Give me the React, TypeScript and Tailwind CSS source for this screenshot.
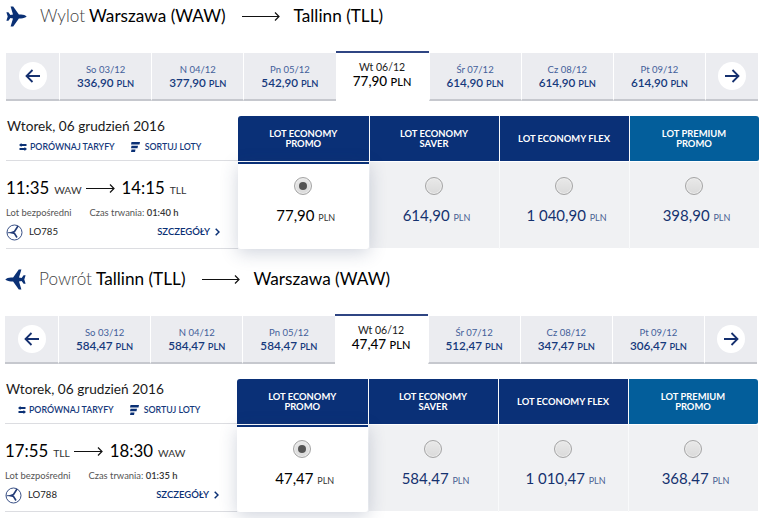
import React from "react";

type Day = { label: string; price: string };
type Fare = { name: string; price: string; premium?: boolean };
type Leg = {
  kind: string;
  from: string;
  to: string;
  back?: boolean;
  days: Day[];
  fares: Fare[];
  dep: string;
  depCode: string;
  arr: string;
  arrCode: string;
  duration: string;
  flight: string;
};

const legs: Leg[] = [
  {
    kind: "Wylot",
    from: "Warszawa (WAW)",
    to: "Tallinn (TLL)",
    days: [
      { label: "So 03/12", price: "336,90" },
      { label: "N 04/12", price: "377,90" },
      { label: "Pn 05/12", price: "542,90" },
      { label: "Wt 06/12", price: "77,90" },
      { label: "Śr 07/12", price: "614,90" },
      { label: "Cz 08/12", price: "614,90" },
      { label: "Pt 09/12", price: "614,90" },
    ],
    fares: [
      { name: "LOT ECONOMY PROMO", price: "77,90" },
      { name: "LOT ECONOMY SAVER", price: "614,90" },
      { name: "LOT ECONOMY FLEX", price: "1 040,90" },
      { name: "LOT PREMIUM PROMO", price: "398,90", premium: true },
    ],
    dep: "11:35",
    depCode: "WAW",
    arr: "14:15",
    arrCode: "TLL",
    duration: "01:40 h",
    flight: "LO785",
  },
  {
    kind: "Powrót",
    from: "Tallinn (TLL)",
    to: "Warszawa (WAW)",
    back: true,
    days: [
      { label: "So 03/12", price: "584,47" },
      { label: "N 04/12", price: "584,47" },
      { label: "Pn 05/12", price: "584,47" },
      { label: "Wt 06/12", price: "47,47" },
      { label: "Śr 07/12", price: "512,47" },
      { label: "Cz 08/12", price: "347,47" },
      { label: "Pt 09/12", price: "306,47" },
    ],
    fares: [
      { name: "LOT ECONOMY PROMO", price: "47,47" },
      { name: "LOT ECONOMY SAVER", price: "584,47" },
      { name: "LOT ECONOMY FLEX", price: "1 010,47" },
      { name: "LOT PREMIUM PROMO", price: "368,47", premium: true },
    ],
    dep: "17:55",
    depCode: "TLL",
    arr: "18:30",
    arrCode: "WAW",
    duration: "01:35 h",
    flight: "LO788",
  },
];

function Plane({ back }: { back?: boolean }) {
  return (
    <svg
      width="21"
      height="21"
      viewBox="0 0 21 21"
      className={back ? "shrink-0 -scale-x-100 fill-[#0a3075]" : "shrink-0 fill-[#0a3075]"}
    >
      <path d="M20.700 10.500C19.500 11.600 17.500 12.300 15 12.400H12.900L7.200 20.500H4.600L7 12.400L4.400 12.100L2.400 14.800H.4L1.700 10.500L.4 6.200H2.400L4.400 8.900L7 8.600L4.600.5H7.200L12.900 8.600H15C17.500 8.700 19.500 9.400 20.700 10.500Z" />
    </svg>
  );
}

function LongArrow({ width }: { width: number }) {
  return (
    <svg width={width} height="10" viewBox={`0 0 ${width} 10`} className="shrink-0" fill="none" stroke="#111" strokeWidth="1.2">
      <path d={`M0 5.500H${width - 1}M${width - 5} 1.500L${width - 1} 5.500L${width - 5} 9.500`} />
    </svg>
  );
}

function NavArrow({ next }: { next?: boolean }) {
  return (
    <span className="flex size-7 items-center justify-center rounded-full bg-white">
      <svg
        width="16"
        height="14"
        viewBox="0 0 16 14"
        fill="none"
        stroke="#15306f"
        strokeWidth="1.8"
        className={next ? "-scale-x-100" : ""}
      >
        <path d="M15 7H1.500M7.500 1L1.500 7L7.500 13" />
      </svg>
    </span>
  );
}

function Radio({ checked }: { checked?: boolean }) {
  return (
    <span className="flex size-[18px] items-center justify-center rounded-full border border-[#a4a4a4] bg-linear-to-b from-[#e9e9e9] to-[#dadada] shadow-[inset_0_0_0_1px_#ececec]">
      {checked && <span className="size-2 rounded-full bg-[#555]" />}
    </span>
  );
}

function DayStrip({ days }: { days: Day[] }) {
  return (
    <div className="flex h-[50px] w-[752px] items-end">
      <div className="flex h-12 w-[53px] items-center justify-center border-b-2 border-[#c6c8ce] bg-[#ebecf0]">
        <NavArrow />
      </div>
      {days.map((d, i) =>
        i === 3 ? (
          <div key={d.label} className="flex h-[50px] w-[93px] flex-col items-center border-t-2 border-[#2f4583] bg-white pt-[7px] text-[#1a1a1a]">
            <span className="text-[10.500px] leading-[14px]">{d.label}</span>
            <span className="text-[13.500px] leading-[14px] font-medium text-black">
              {d.price} <span className="text-[11px]">PLN</span>
            </span>
          </div>
        ) : (
          <div key={d.label} className="flex h-12 min-w-0 flex-1 flex-col items-center border-b-2 border-l border-b-[#c6c8ce] border-l-white bg-[#ebecf0] pt-[10px] text-[#15397c]">
            <span className="text-[9.500px] leading-[13px] text-[#43609a]">{d.label}</span>
            <span className="text-[11.700px] leading-[12px] font-semibold">
              {d.price} <span className="text-[9.300px]">PLN</span>
            </span>
          </div>
        ),
      )}
      <div className="flex h-12 w-[53px] items-center justify-center border-b-2 border-l border-b-[#c6c8ce] border-l-white bg-[#ebecf0]">
        <NavArrow next />
      </div>
    </div>
  );
}

function FlightInfo({ leg }: { leg: Leg }) {
  return (
    <div className="flex w-[232px] flex-col">
      <div className="flex h-[45px] flex-col border-b border-[#dcdde1]">
        <div className="flex h-[21px] items-center pl-px text-[13.650px] text-[#1a1a1a]">Wtorek, 06 grudzień 2016</div>
        <div className="flex h-5 items-center text-[8.800px] font-semibold text-[#15397c]">
          <svg width="8" height="8" viewBox="0 0 8 8" className="ml-[13px] shrink-0" fill="#0a3075">
            <path d="M0 2L2.500 0V1H7.500V3H2.500V4ZM8 6L5.500 4V5H.5V7H5.500V8Z" />
          </svg>
          <span className="ml-[3px]">PORÓWNAJ TARYFY</span>
          <svg width="9" height="10" viewBox="0 0 9 10" className="ml-4 shrink-0" fill="#0a3075">
            <path d="M.5 0H9L8.500 2.500H0ZM.5 3.800H7L6.500 6.200H0ZM.5 7.500H4.500L4 10H0Z" />
          </svg>
          <span className="ml-[5px]">SORTUJ LOTY</span>
        </div>
      </div>
      <div className="flex h-[88px] flex-col border-b border-[#dcdde1] pt-4">
        <div className="flex h-[22px] items-baseline text-[16.800px] leading-[22px] text-black">
          <span>{leg.dep}</span>
          <span className="ml-[5px] text-[10.300px] text-[#333]">{leg.depCode}</span>
          <span className="ml-1 self-center">
            <LongArrow width={29} />
          </span>
          <span className="ml-[7px]">{leg.arr}</span>
          <span className="ml-[5px] text-[10.300px] text-[#333]">{leg.arrCode}</span>
        </div>
        <div className="mt-[7px] flex h-3.5 items-center text-[9.400px] text-[#555]">
          <span>Lot bezpośredni</span>
          <span className="ml-[18px]">
            Czas trwania: <span className="font-semibold text-[#333]">{leg.duration}</span>
          </span>
        </div>
        <div className="mt-1 flex h-4 items-center">
          <svg width="17" height="17" viewBox="0 0 17 17" fill="none" stroke="#233c77" className="shrink-0">
            <circle cx="8.500" cy="8.500" r="7.500" strokeWidth="0.9" />
            <path d="M12 2L8.500 7.500L5.500 8.700L8.500 9.500L11 13.500" strokeWidth="1.600" />
            <path d="M1.500 8.700H6" strokeWidth="0.9" />
          </svg>
          <span className="ml-[6px] text-[9.600px] text-[#222]">{leg.flight}</span>
          <span className="ml-auto text-[9.500px] font-semibold text-[#0a3075]">SZCZEGÓŁY</span>
          <svg width="5" height="8" viewBox="0 0 5 8" fill="none" stroke="#0a3075" strokeWidth="1.500" className="mr-[18px] ml-[5px]">
            <path d="M.7.700L4 4L.7 7.300" />
          </svg>
        </div>
      </div>
    </div>
  );
}

function FareColumn({ fare, index }: { fare: Fare; index: number }) {
  const active = index === 0;
  const head = fare.premium ? "bg-[#035e9b] rounded-tr-[3px] rounded-br-[2px]" : "bg-[#0a3077]";
  return (
    <div className={active ? "z-10 flex w-[130.500px] flex-col" : "flex w-[130px] flex-col border-l border-[#f9fafb]"}>
      <div
        className={`flex h-[45px] items-center justify-center px-6 text-center text-[9.400px] leading-[9.500px] font-bold text-white ${head} ${active ? "rounded-tl-[3px]" : ""}`}
      >
        {fare.name.endsWith("FLEX") ? <span className="whitespace-nowrap">{fare.name}</span> : <span className="w-[80px]">{fare.name}</span>}
      </div>
      <div
        className={
          active
            ? "mt-px flex h-[87px] flex-col items-center rounded-b-[3px] border-t-2 border-[#0a3077] bg-white pt-[13px] text-black shadow-[0_4px_18px_rgba(40,60,100,0.22)]"
            : "mt-px flex h-[86px] flex-col items-center bg-[#f0f1f3] pt-[15px] text-[#15326f]"
        }
      >
        <Radio checked={active} />
        <div className="mt-[9px] pl-[5px] text-[15px] leading-[22px]">
          {fare.price} <span className={active ? "text-[9px] text-[#333]" : "text-[9px] text-[#4a5f92]"}>PLN</span>
        </div>
      </div>
    </div>
  );
}

function LegSection({ leg }: { leg: Leg }) {
  return (
    <section className={leg.back ? "h-[263px] pl-[5px]" : "h-[263px] pl-1.5"}>
      <div className="flex h-[51px] items-start">
        <div className="flex h-8 items-center text-[17.200px] text-black">
          <Plane back={leg.back} />
          <span className="ml-[13px] font-light text-[#444]">{leg.kind}</span>
          <span className="ml-1">{leg.from}</span>
          <span className="ml-4 flex">
            <LongArrow width={38} />
          </span>
          <span className="ml-3.5">{leg.to}</span>
        </div>
      </div>
      <DayStrip days={leg.days} />
      <div className="mt-[15px] flex">
        <FlightInfo leg={leg} />
        <div className="flex">
          {leg.fares.map((f, i) => (
            <FareColumn key={f.name} fare={f} index={i} />
          ))}
        </div>
      </div>
    </section>
  );
}

export default function App() {
  return (
    <main className="h-[518px] w-[762px] overflow-hidden bg-white font-['Lato',sans-serif]">
      {legs.map((leg) => (
        <LegSection key={leg.kind} leg={leg} />
      ))}
    </main>
  );
}
